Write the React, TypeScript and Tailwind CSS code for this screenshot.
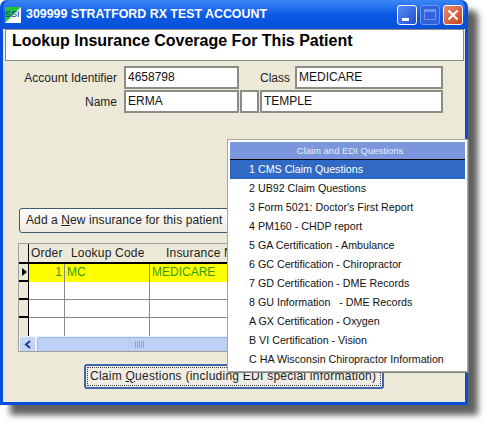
import React from "react";

const menuItems = [
  "1 CMS Claim Questions",
  "2 UB92 Claim Questions",
  "3 Form 5021: Doctor's First Report",
  "4 PM160 - CHDP report",
  "5 GA Certification - Ambulance",
  "6 GC Certification - Chiropractor",
  "7 GD Certification - DME Records",
  "8 GU Information   - DME Records",
  "A GX Certification - Oxygen",
  "B VI Certification - Vision",
  "C HA Wisconsin Chiropractor Information",
];

function Field({ value, className }: { value: string; className: string }) {
  return (
    <div className={`h-[23px] border-2 border-[#8c8c84] bg-white pl-[2px] text-[12px] leading-[18px] text-[#111] ${className}`}>
      {value}
    </div>
  );
}

function GridRow({ selected, order, code, name }: { selected?: boolean; order?: string; code?: string; name?: string }) {
  const bg = selected ? "bg-[#ffff00]" : "bg-white";
  return (
    <div className="flex h-[18px] border-b-[1.5px] border-[#8a8a8a] last:border-b-0">
      <div className={`w-[36px] shrink-0 border-r-[1px] border-[#8a8a8a] pr-[2px] text-right ${bg}`}>{order}</div>
      <div className={`w-[85px] shrink-0 border-r-[1px] border-[#8a8a8a] pl-[2px] ${bg}`}>{code}</div>
      <div className={`flex-1 pl-[2px] ${bg}`}>{name}</div>
    </div>
  );
}

export default function App() {
  return (
    <div className="h-[428px] w-[490px] bg-white font-['Liberation_Sans',Arial,sans-serif]">
      <div className="relative flex h-[405px] w-[468px] flex-col rounded-t-[7px] bg-[#0a4fdc] px-[3px] pb-[3px] shadow-[10px_10px_6px_#606060]">
        {/* title bar */}
        <div className="flex h-[29px] shrink-0 items-center rounded-t-[7px] bg-gradient-to-b from-[#3a86f4] via-[#0a5ae6] to-[#0a50d8] pl-[2px] pr-[2px]">
          <svg width="16" height="16" viewBox="0 0 16 16" className="mt-[1px] shrink-0">
            <rect width="16" height="16" fill="#ffffff" />
            <polygon points="0,0 16,0 0,16" fill="#1fc43c" />
            <text x="0" y="10" fontSize="9" fill="#1a2aa0" fontFamily="Liberation Sans">SSI</text>
          </svg>
          <div className="ml-[5px] flex-1 whitespace-nowrap text-[12.4px] font-bold text-white">309999 STRATFORD RX TEST ACCOUNT</div>
          <div className="flex gap-[3px]">
            <div className="flex h-[20px] w-[20px] items-end rounded-[3px] border border-white bg-gradient-to-br from-[#5a8cf4] to-[#1e50d0] pb-[3px] pl-[4px]">
              <div className="h-[3px] w-[7px] bg-white" />
            </div>
            <div className="flex h-[20px] w-[20px] items-center justify-center rounded-[3px] border border-[#6f93ea] bg-[#2f62dc]">
              <div className="h-[11px] w-[12px] border border-t-[3px] border-[#6f93ea]" />
            </div>
            <div className="flex h-[20px] w-[20px] items-center justify-center rounded-[3px] border border-white bg-gradient-to-br from-[#ea8a68] to-[#c8401c]">
              <svg width="12" height="12" viewBox="0 0 12 12">
                <path d="M1.5 1.5 L10.5 10.5 M10.5 1.5 L1.5 10.5" stroke="#fff" strokeWidth="2.2" />
              </svg>
            </div>
          </div>
        </div>

        {/* client area */}
        <div className="flex flex-1 flex-col bg-[#ece9d8] pl-[2px] pr-[1px]">
          <div className="h-[32px] whitespace-nowrap border-[1px] border-[#8c8c84] bg-white pl-[6px] text-[16px] font-bold leading-[22px] text-black">
            Lookup Insurance Coverage For This Patient
          </div>

          <div className="mt-[5px] flex h-[23px] items-center text-[12px] text-[#222]">
            <div className="w-[113px] pr-[1px] text-right">Account Identifier</div>
            <Field value="4658798" className="ml-[6px] w-[115px]" />
            <div className="w-[51px] text-right">Class</div>
            <Field value="MEDICARE" className="ml-[5px] w-[148px]" />
          </div>
          <div className="mt-[1px] flex h-[23px] items-center text-[12px] text-[#222]">
            <div className="w-[113px] pr-[1px] text-right">Name</div>
            <Field value="ERMA" className="ml-[6px] w-[115px]" />
            <Field value="" className="ml-[1px] w-[19px]" />
            <Field value="TEMPLE" className="ml-[1px] w-[183px]" />
          </div>

          <div className="ml-[14px] mt-[95px] h-[25px] w-[230px] whitespace-nowrap rounded-[3px] border border-[#3c5a74] bg-gradient-to-b from-white to-[#ece9e0] pl-[6px] text-[12px] leading-[23px] tracking-[0.1px] text-[#222]">
            Add a <span className="underline">N</span>ew insurance for this patient
          </div>

          {/* coverage grid, its right part lies under the popup */}
          <div className="ml-[13px] mt-[10px] h-[109px] w-[300px] overflow-hidden border border-[#a0a0a0] bg-white text-[12px] text-[#222]">
            <div className="flex h-[20px] border-b-2 border-black bg-[#ece9d8] leading-[18px] tracking-[0.2px]">
              <div className="w-[10px] shrink-0 border-r-[1px] border-black" />
              <div className="w-[36px] shrink-0 pl-[2px]">Order</div>
              <div className="w-[85px] shrink-0 whitespace-nowrap pl-[6px]">Lookup Code</div>
              <div className="flex-1 whitespace-nowrap pl-[16px]">Insurance Name</div>
            </div>
            <div className="flex">
              <div className="w-[10px] shrink-0 border-r-[1px] border-black bg-[#ece9d8]">
                <div className="flex h-[18px] items-center border-b-2 border-black">
                  <svg width="5" height="8" viewBox="0 0 5 8" className="ml-[3px]"><polygon points="0,0 5,4 0,8" fill="#000" /></svg>
                </div>
                <div className="h-[18px] border-b-2 border-black" />
                <div className="h-[18px] border-b-2 border-black" />
                <div className="h-[16px]" />
              </div>
              <div className="flex-1 leading-[16px]">
                <div className="text-[#2e9a12]"><GridRow selected order="1" code="MC" name="MEDICARE" /></div>
                <GridRow />
                <GridRow />
                <GridRow />
              </div>
            </div>
            {/* scrollbar */}
            <div className="flex h-[17px] items-stretch bg-[#eef1fc] p-[1px]">
              <div className="flex w-[15px] items-center justify-center rounded-[2px] bg-[#c4d4f6]">
                <svg width="8" height="9" viewBox="0 0 8 9"><path d="M6 1 L2 4.5 L6 8" stroke="#1d3c8c" strokeWidth="2" fill="none" /></svg>
              </div>
              <div className="ml-[2px] mr-[75px] flex flex-1 items-center justify-center rounded-[2px] border border-[#9db8ec] bg-[#bcd0f6]">
                <div className="h-[7px] w-[9px] bg-[repeating-linear-gradient(90deg,#8aa4dc_0_1px,transparent_1px_2px)]" />
              </div>
            </div>
          </div>

          <div className="ml-[79px] mt-[12px] flex h-[25px] w-[300px] items-center rounded-[3px] border-2 border-[#3f66a8] bg-[#f0eee4] p-[1px] text-[12px] text-[#222]">
            <div className="h-full w-full whitespace-nowrap border border-dotted border-[#444] pl-[2px] leading-[17px] tracking-[0.25px]">
              Claim <span className="underline">Q</span>uestions (including EDI special information)
            </div>
          </div>
        </div>

        {/* popup menu */}
        <div className="absolute left-[227px] top-[139px] flex h-[233px] w-[241px] flex-col border border-[#a8a89c] bg-white p-[2px] text-[10.7px] shadow-[1px_1px_0_#808080]">
          <div className="h-[18px] border-b border-black bg-[#7b96dc] pl-[5px] text-center text-[9.5px] leading-[17px] text-[#e8ecf8]">Claim and EDI Questions</div>
          {menuItems.map((item, i) => (
            <div
              key={item}
              className={`h-[19px] whitespace-pre pl-[19px] leading-[19px] ${i === 0 ? "bg-[#316ac5] text-white" : "text-[#111]"}`}
            >
              {item}
            </div>
          ))}
        </div>
      </div>
    </div>
  );
}
